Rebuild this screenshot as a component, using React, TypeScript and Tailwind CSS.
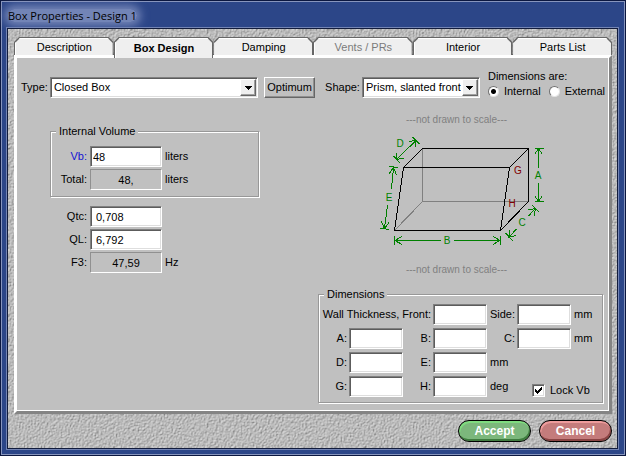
import React, { useState } from 'react';
import clsx from 'clsx';

const tabs = [
  { name: 'Description' },
  { name: 'Box Design' },
  { name: 'Damping' },
  { name: 'Vents / PRs', disabled: true },
  { name: 'Interior' },
  { name: 'Parts List' }
];

const sunken =
  'h-[21px] border border-t-[#808080] border-l-[#808080] border-b-white border-r-white bg-white shadow-[inset_1px_1px_0_#5c5c5c,inset_-1px_-1px_0_#dedede]';

const Texture: React.FC = () => (
  <svg className="absolute inset-0 w-full h-full" aria-hidden="true">
    <filter id="stone" x="0" y="0" width="100%" height="100%" colorInterpolationFilters="sRGB">
      <feTurbulence type="fractalNoise" baseFrequency="0.65" numOctaves="2" seed="4" result="noise" />
      <feDiffuseLighting in="noise" surfaceScale="1" diffuseConstant="1.05" lightingColor="#d2d2d2">
        <feDistantLight azimuth="225" elevation="58" />
      </feDiffuseLighting>
    </filter>
    <rect width="100%" height="100%" filter="url(#stone)" />
  </svg>
);

type TabProps = { name: string; active: boolean; disabled?: boolean; onClick: () => void };

const Tab: React.FC<TabProps> = ({ name, active, disabled, onClick }) => (
  <button
    type="button"
    role="tab"
    aria-selected={active}
    disabled={disabled}
    onClick={onClick}
    className={clsx(
      'flex-1 flex bg-[#666] pt-px pl-px pr-px [clip-path:polygon(0_100%,0_5px,5px_0,calc(100%-5px)_0,100%_5px,100%_100%)]',
      active ? 'h-[21px] relative' : 'h-[18px]'
    )}
  >
    <span
      className={clsx(
        'flex-1 h-full flex items-center justify-center bg-[#efefef] border-t border-l border-white [clip-path:polygon(0_100%,0_5px,5px_0,calc(100%-5px)_0,100%_5px,100%_100%)]',
        active && 'font-bold',
        disabled && 'text-[#7b7b7b]'
      )}
    >
      {name}
    </span>
  </button>
);

type SelectProps = { id: string; options: string[]; className?: string };

const Select: React.FC<SelectProps> = ({ id, options, className }) => (
  <div className={clsx('relative', className)}>
    <select id={id} className={clsx(sunken, 'w-full appearance-none pl-[3px] pr-[18px] outline-none')}>
      {options.map((option) => (
        <option key={option}>{option}</option>
      ))}
    </select>
    <span className="absolute right-[2px] top-[2px] w-4 h-[17px] flex items-center justify-center pointer-events-none bg-[#efefef] border border-t-white border-l-white border-b-[#666] border-r-[#666] shadow-[inset_-1px_-1px_0_#a0a0a0]">
      <svg width="7" height="4" shapeRendering="crispEdges">
        <path d="M0 0h7v1H6v1H5v1H4v1H3V3H2V2H1V1H0z" />
      </svg>
    </span>
  </div>
);

type FieldProps = {
  id: string;
  label: string;
  value: string;
  unit?: string;
  output?: boolean;
  labelClass?: string;
  inputClass?: string;
};

const Field: React.FC<FieldProps> = ({ id, label, value, unit, output, labelClass, inputClass }) => (
  <div className="flex items-center">
    <label htmlFor={id} className={clsx('w-9 mr-[3px] text-right', labelClass)}>
      {label}
    </label>
    <input
      id={id}
      defaultValue={value}
      readOnly={output}
      className={clsx(
        'w-[72px] outline-none',
        output
          ? 'h-[21px] text-center bg-[#c0c0c0] border border-t-[#909090] border-l-[#909090] border-b-white border-r-white'
          : sunken,
        inputClass
      )}
    />
    {unit && <span className="ml-[3px]">{unit}</span>}
  </div>
);

type DimProps = { id: string; label: string; labelClass?: string };

const Dim: React.FC<DimProps> = ({ id, label, labelClass }) => (
  <>
    <label htmlFor={id} className={clsx('text-right pr-[2px] whitespace-nowrap', labelClass)}>
      {label}
    </label>
    <input id={id} className={clsx(sunken, 'w-full px-1 outline-none')} />
  </>
);

type GroupProps = { title: string; className?: string; children: React.ReactNode };

const Group: React.FC<GroupProps> = ({ title, className, children }) => (
  <fieldset className={clsx('border border-[#989898] shadow-[inset_1px_1px_0_white,1px_1px_0_white]', className)}>
    <legend className="ml-[5px] px-[3px] leading-4 bg-[#c0c0c0]">{title}</legend>
    {children}
  </fieldset>
);

const BoxDrawing: React.FC = () => (
  <svg width="175" height="120" viewBox="-9 0 175 120" fill="none" fontSize="10">
    <g shapeRendering="crispEdges">
      <path stroke="#808080" d="M44.5 14.5V67.5H150.5M44.5 67.5L16.5 96.5" />
      <path
        stroke="#000"
        d="M25.5 33.5L44.5 14.5H150.5V67.5L122.5 96.5H16.5L25.5 33.5H131.5L150.5 14.5M131.5 33.5L122.5 96.5"
      />
      <g stroke="#008000">
        {/* A */}
        <path d="M156.5 14.5h9M156.5 67.5h9M160.5 14.5V34M160.5 49V67.5M157 19.5L160.5 15L164 19.5M157 62.5L160.5 67L164 62.5" />
        {/* B */}
        <path d="M16.5 102v9M122.5 102v9M16.5 106.5H63M76 106.5H122.5M24 102.5L17 106.5L24 110.5M115 102.5L122 106.5L115 110.5" />
        {/* C */}
        <path d="M154 71L161 78M127.5 99L135 107M157.5 74.5L150.5 82M138.5 95L131 103M150.5 76L157.5 74.5L156 82M132 96L131 103L138.5 101.5" />
        {/* D */}
        <path d="M15.5 22L22 29M34.5 3L41.5 10M18.5 25.5L38 6.5M19 19L18.5 25.5L26 24M31 7.5L38 6.5L37 13" />
        {/* E */}
        <path d="M11 32.5L20 33.5M2 94L11 95.5M15.5 33.5L13.5 55M9.5 71L6.5 94.5M11 40L15.5 33.5L18.5 41M3 87L6.5 94.5L11 88.5" />
      </g>
    </g>
    <g fill="#008000" textAnchor="middle">
      <text x="160" y="45">A</text>
      <text x="69" y="110">B</text>
      <text x="144" y="92">C</text>
      <text x="22" y="13">D</text>
      <text x="11" y="67">E</text>
    </g>
    <g fill="#800000" textAnchor="middle">
      <text x="140" y="40">G</text>
      <text x="134" y="73">H</text>
    </g>
  </svg>
);

const Radio: React.FC<{ label: string; checked?: boolean }> = ({ label, checked }) => (
  <label className="flex items-center gap-[5px]">
    <input
      type="radio"
      name="side"
      defaultChecked={checked}
      className="appearance-none w-[11px] h-[11px] rounded-full bg-white border border-t-[#707070] border-l-[#707070] border-b-[#e4e4e4] border-r-[#e4e4e4] checked:bg-[radial-gradient(circle,black_2px,white_3px)]"
    />
    {label}
  </label>
);

const App: React.FC = () => {
  const [active, setActive] = useState('Box Design');

  return (
    <div className="min-h-screen flex flex-col bg-[#0b1740] p-px font-['Liberation_Sans',Arial,sans-serif] text-[11px] leading-[13px] text-black">
      <div className="flex-1 flex flex-col bg-[#2c4688] border border-[#8795bd] pl-[5px] pr-[6px] pb-[5px]">
        <div className="h-[26px] flex items-center px-px shrink-0">
          <h1 className="rounded-full bg-[#8494c2]/80 shadow-[0_0_8px_4px_rgba(132,148,194,0.8)] font-['Open_Sans',sans-serif] text-[11px]">
            Box Properties - Design 1
          </h1>
        </div>

        <div className="flex-1 relative flex flex-col border border-[#121c3c] bg-[#b0b0b0] shadow-[0_0_0_1px_#7384b4] pl-[6px] pr-[5px] pt-2">
          <Texture />

          <div role="tablist" className="relative z-10 h-[18px] flex items-start shrink-0">
            {tabs.map((tab) => (
              <Tab
                key={tab.name}
                name={tab.name}
                disabled={tab.disabled}
                active={tab.name === active}
                onClick={() => setActive(tab.name)}
              />
            ))}
          </div>

          <div className="relative flex-1 bg-[#c0c0c0] border-3 border-t-white border-l-white border-r-[#848484] border-b-[#848484] shadow-[inset_-1px_-1px_0_white,0_-1px_0_#666]">
            {/* Type and shape */}
            <div className="flex items-end pl-1 pr-1 pt-3">
              <label htmlFor="type" className="mr-[2px] mb-1">Type:</label>
              <Select id="type" options={['Closed Box', 'Vented Box', 'Bandpass']} className="flex-1" />
              <button
                type="button"
                className="ml-[6px] h-[21px] w-[51px] bg-[#c0c0c0] border border-t-white border-l-white border-b-[#666] border-r-[#666] shadow-[inset_-1px_-1px_0_#909090]"
              >
                Optimum
              </button>
              <label htmlFor="shape" className="ml-[10px] mr-[2px] mb-1">Shape:</label>
              <Select id="shape" options={['Prism, slanted front', 'Prism, square', 'Cylinder']} className="w-[118px]" />
              <div role="radiogroup" aria-labelledby="dims-are" className="ml-2 h-7">
                <p id="dims-are">Dimensions are:</p>
                <div className="flex gap-2 mt-[2px]">
                  <Radio label="Internal" checked />
                  <Radio label="External" />
                </div>
              </div>
            </div>

            <div className="flex justify-between pl-[33px] pr-[6px]">
              {/* Volume */}
              <div className="w-[209px] pt-[25px]">
                <Group title="Internal Volume" className="pt-[7px] pb-[6px]">
                  <div className="space-y-[2px]">
                    <Field id="vb" label="Vb:" value="48" unit="liters" labelClass="text-[#1414d2]" inputClass="px-[2px]" />
                    <Field id="total" label="Total:" value="48," unit="liters" output />
                  </div>
                </Group>
                <div className="mt-[9px] px-px space-y-[2px]">
                  <Field id="qtc" label="Qtc:" value="0,708" inputClass="px-[5px]" />
                  <Field id="ql" label="QL:" value="6,792" inputClass="px-[5px]" />
                  <Field id="f3" label="F3:" value="47,59" unit="Hz" output />
                </div>
              </div>

              {/* Drawing and dimensions */}
              <div className="w-[285px] pt-[14px]">
                <div className="flex flex-col items-center pr-2 text-[10px] leading-4 text-[#808080]">
                  <p>---not drawn to scale---</p>
                  <div className="mt-[6px] mb-2">
                    <BoxDrawing />
                  </div>
                  <p>---not drawn to scale---</p>
                </div>

                <Group title="Dimensions" className="mt-2 pt-[2px] pb-[5px]">
                  <div className="grid grid-cols-[30px_54px_30px_54px_30px_54px_1fr] gap-y-[3px] items-center">
                    <Dim id="front" label="Wall Thickness, Front:" labelClass="col-span-3" />
                    <Dim id="side" label="Side:" />
                    <span className="pl-[3px]">mm</span>

                    <Dim id="a" label="A:" />
                    <Dim id="b" label="B:" />
                    <Dim id="c" label="C:" />
                    <span className="pl-[3px]">mm</span>

                    <Dim id="d" label="D:" />
                    <Dim id="e" label="E:" />
                    <span className="pl-[3px] col-span-3">mm</span>

                    <Dim id="g" label="G:" />
                    <Dim id="h" label="H:" />
                    <span className="pl-[3px]">deg</span>
                    <label className="col-span-2 self-end flex items-center gap-[5px] pl-[15px]">
                      <span className="relative w-[13px] h-[13px]">
                        <input
                          type="checkbox"
                          defaultChecked
                          className="peer block appearance-none w-[13px] h-[13px] bg-white border border-t-[#808080] border-l-[#808080] border-b-white border-r-white shadow-[inset_1px_1px_0_#5c5c5c,inset_-1px_-1px_0_#dedede]"
                        />
                        <svg
                          width="7"
                          height="7"
                          shapeRendering="crispEdges"
                          className="absolute left-[3px] top-[3px] pointer-events-none invisible peer-checked:visible"
                        >
                          <path d="M0 2h1v1h1v1h1V3h1V2h1V1h1V0h1v3H6v1H5v1H4v1H3v1H2V6H1V5H0z" />
                        </svg>
                      </span>
                      Lock Vb
                    </label>
                  </div>
                </Group>
              </div>
            </div>
          </div>

          <div className="relative flex justify-end gap-2 py-[6px] text-[12px] font-bold text-white">
            <button
              type="button"
              className="w-[73px] h-[22px] rounded-full border border-black bg-[#7cb77c] shadow-[inset_1px_2px_0_#7fdc7f,inset_-1px_-2px_0_#3f7c3f]"
            >
              Accept
            </button>
            <button
              type="button"
              className="w-[73px] h-[22px] rounded-full border border-black bg-[#c47c7c] shadow-[inset_1px_2px_0_#ee9c9c,inset_-1px_-2px_0_#8a4444]"
            >
              Cancel
            </button>
          </div>
        </div>
      </div>
    </div>
  );
};

export default App;
